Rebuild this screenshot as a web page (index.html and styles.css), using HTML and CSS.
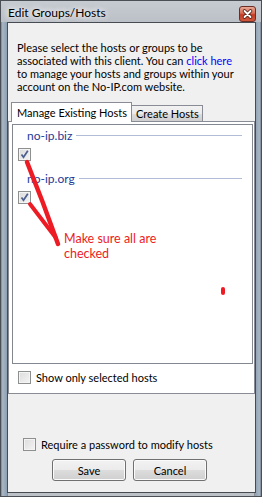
FILE: index.html
```html
<!DOCTYPE html>
<html lang="en">
  <head>
    <meta charset="UTF-8" />
    <title>Edit Groups/Hosts</title>
    <link rel="stylesheet" href="styles.css">
  </head>
  <body>
    <div class="window">
      <div class="titlebar">
        <span class="title">Edit Groups/Hosts</span>
        <span class="close-btn">
          <svg width="15" height="14" viewBox="0 0 15 14">
            <path d="M4.5 4 L10.5 10 M10.5 4 L4.5 10" stroke="#5a2418" stroke-width="3.6" stroke-linecap="round" />
            <path d="M4.5 4 L10.5 10 M10.5 4 L4.5 10" stroke="#ffffff" stroke-width="1.8" stroke-linecap="round" />
          </svg>
        </span>
      </div>
      <div class="client">
        <p class="intro"><span class="line">Please select the hosts or groups to be</span><span class="line">associated with this client. You can <a href="#">click here</a></span><span class="line">to manage your hosts and groups within your</span><span class="line">account on the No-IP.com website.</span></p>
        <div class="tabs">
          <div class="tab-strip">
            <span class="tab active">Manage Existing Hosts</span>
            <span class="tab">Create Hosts</span>
          </div>
          <div class="tab-page">
            <div class="host-list">
              <div class="group">
                <span class="group-name">no-ip.biz</span>
                <span class="group-line"></span>
              </div>
              <span class="check checked">
                <svg width="11" height="11" viewBox="0 0 11 11"><path d="M2.5 5.5 L4.5 8.3 L8.8 1.8" fill="none" stroke="#4b5f8f" stroke-width="1.7" /></svg>
              </span>
              <div class="group">
                <span class="group-name">no-ip.org</span>
                <span class="group-line"></span>
              </div>
              <span class="check checked">
                <svg width="11" height="11" viewBox="0 0 11 11"><path d="M2.5 5.5 L4.5 8.3 L8.8 1.8" fill="none" stroke="#4b5f8f" stroke-width="1.7" /></svg>
              </span>
            </div>
            <label class="check-row">
              <span class="check"></span>
              Show only selected hosts
            </label>
          </div>
        </div>
        <label class="check-row password-row">
          <span class="check"></span>
          Require a password to modify hosts
        </label>
        <div class="buttons">
          <button type="button" class="btn">Save</button>
          <button type="button" class="btn">Cancel</button>
        </div>
      </div>

      <!-- red markup drawn over the screenshot -->
      <svg class="scribble" width="262" height="497" viewBox="0 0 262 497">
        <polyline points="27,162 43,203 58,244" fill="none" stroke="#ed1c24" stroke-width="4.5" stroke-linecap="round" />
        <polyline points="30,204 56,238" fill="none" stroke="#ed1c24" stroke-width="4" stroke-linecap="round" />
      </svg>
      <div class="note">Make sure all are<br>checked</div>
      <span class="dot"></span>
    </div>
  </body>
</html>
```

FILE: styles.css
```css
body {
  margin: 0;
  background: #fff;
  font-family: Lato, "Open Sans", sans-serif;
  font-size: 11px;
  color: #000;
}
.window {
  position: relative;
  width: 262px;
  height: 497px;
  box-sizing: border-box;
  padding: 0 6px 4px 7px;
  display: flex;
  flex-direction: column;
  background: linear-gradient(90deg, #5d6670 0%, #a9b6c4 1%, #8fa2b6 2.5%, #4d545c 2.7%, #bcc1c7 3%, #bcc1c7 97%, #4d545c 97.3%, #8fa2b6 97.5%, #a9b6c4 99%, #5d6670 100%);
  box-shadow: inset 0 0 0 1px #4a4f56;
}
.titlebar {
  display: flex;
  align-items: center;
  background: linear-gradient(180deg, #c6cbd1 0%, #bcc1c8 100%);
  margin: 1px -5px 0 -6px;
  padding: 0 5px 0 7px;
  box-sizing: border-box;
  height: 21px;
}
.title {
  font-size: 12px;
  padding-top: 2px;
  text-shadow: 0 0 6px #fff, 0 0 6px #fff;
}
.close-btn {
  margin-left: auto;
  margin-top: 4px;
  width: 17px;
  height: 16px;
  box-sizing: border-box;
  display: flex;
  align-items: center;
  justify-content: center;
  border: 1px solid #6b2d24;
  border-radius: 3px;
  background: linear-gradient(180deg, #e8a896 0%, #d66a52 45%, #c43b26 55%, #d0573c 100%);
}
.client {
  flex: 1;
  display: flex;
  flex-direction: column;
  background: #f0f0f0;
  border: 1px solid #474c53;
}
.intro {
  margin: 18px 0 0;
  padding-left: 9px;
  line-height: 13px;
  white-space: nowrap;
}
.intro .line {
  display: block;
}
.intro a {
  color: #0000ff;
  text-decoration: none;
}
.tabs {
  margin-top: 9px;
}
.tab-strip {
  display: flex;
  align-items: flex-end;
  height: 19px;
  padding-left: 3px;
  position: relative;
  z-index: 1;
}
.tab {
  box-sizing: border-box;
  height: 16px;
  width: 72px;
  margin-left: -1px;
  padding-left: 4px;
  line-height: 15px;
  border: 1px solid #898c95;
  border-bottom: none;
  background: linear-gradient(180deg, #f2f2f2 0%, #ebebeb 50%, #dddddd 51%, #cfcfcf 100%);
  white-space: nowrap;
}
.tab.active {
  position: relative;
  z-index: 1;
  margin-left: 0;
  width: 121px;
  height: 20px;
  margin-bottom: -1px;
  padding-left: 5px;
  line-height: 19px;
  background: #fff;
}
.tab-page {
  box-sizing: border-box;
  height: 273px;
  border: 1px solid #898c95;
  background: #fff;
  padding: 2px 1px 8px 3px;
}
.host-list {
  box-sizing: border-box;
  height: 240px;
  border: 1px solid #828790;
  padding: 4px 10px 0 0;
}
.group {
  display: flex;
  align-items: center;
  gap: 4px;
  height: 13px;
  padding-left: 14px;
  color: #1e3a96;
  font-size: 12px;
}
.group-line {
  flex: 1;
  height: 1px;
  background: #b1bdd8;
}
.check {
  box-sizing: border-box;
  width: 13px;
  height: 13px;
  display: flex;
  align-items: center;
  justify-content: center;
  border: 1px solid #8e8f8f;
  background: linear-gradient(135deg, #dcdcdc 0%, #f4f4f4 100%);
  box-shadow: inset 0 0 0 1px #f4f4f4;
}
.host-list .check {
  margin: 6px 0 11px 5px;
}
.check-row {
  display: flex;
  align-items: center;
  gap: 5px;
  height: 13px;
  line-height: 13px;
  margin: 7px 0 0 6px;
  white-space: nowrap;
}
.password-row {
  margin: auto 0 0 15px;
}
.buttons {
  display: flex;
  gap: 7px;
  padding-left: 44px;
  margin: 8px 0 11px;
}
.btn {
  box-sizing: border-box;
  width: 74px;
  height: 22px;
  padding: 0;
  border: 1px solid #707070;
  border-radius: 3px;
  background: linear-gradient(180deg, #f2f2f2 0%, #ebebeb 50%, #dddddd 51%, #cfcfcf 100%);
  box-shadow: inset 0 0 0 1px #fbfbfb;
  font-family: Lato, "Open Sans", sans-serif;
  font-size: 11px;
  color: #000;
}
.scribble {
  position: absolute;
  left: 0;
  top: 0;
  pointer-events: none;
}
.note {
  position: absolute;
  left: 64px;
  top: 231px;
  line-height: 15px;
  font-size: 12.5px;
  color: #ed1c24;
}
.dot {
  position: absolute;
  left: 221px;
  top: 287px;
  width: 4px;
  height: 8px;
  border-radius: 2px;
  background: #ed1c24;
}
```
